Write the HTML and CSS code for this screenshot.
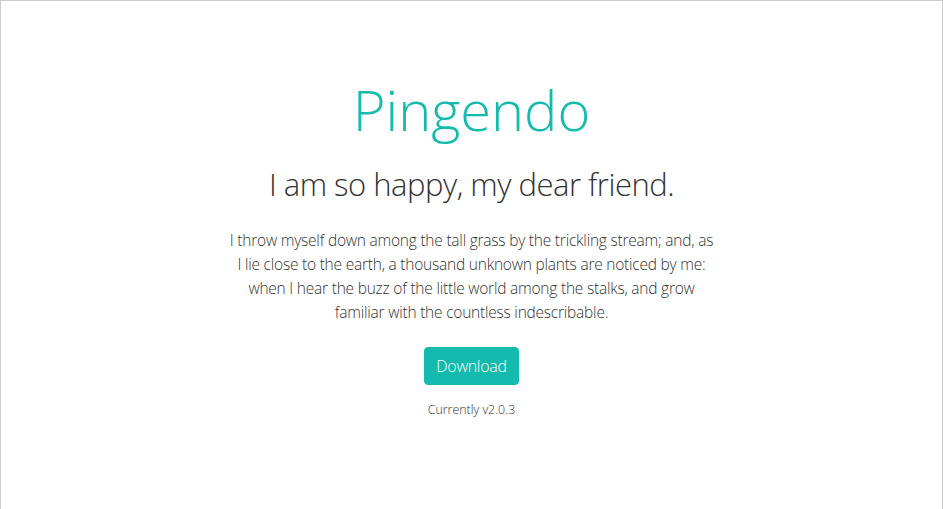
FILE: index.html
```html
<!DOCTYPE html>
<html lang="en">
<head>
<meta charset="utf-8">
<title>Pingendo</title>
<link rel="stylesheet" href="styles.css">
</head>
<body>
<div class="frame">
  <section class="hero">
    <h1 class="title">Pingendo</h1>
    <h2 class="subtitle">I am so happy, my dear friend.</h2>
    <p class="lead">I throw myself down among the tall grass by the trickling stream; and, as I lie close to the earth, a thousand unknown plants are noticed by me: when I hear the buzz of the little world among the stalks, and grow familiar with the countless indescribable.</p>
    <a class="btn" href="#">Download</a>
    <p class="version">Currently v2.0.3</p>
  </section>
</div>
</body>
</html>
```
FILE: styles.css
```css
html, body {
  margin: 0;
  padding: 0;
  height: 100%;
}
body {
  font-family: "Open Sans", "Liberation Sans", sans-serif;
  font-weight: 300;
  color: #333;
  background: #fff;
}
.frame {
  box-sizing: border-box;
  height: 100%;
  border: 1px solid #cccccc;
  border-bottom: none;
}
.hero {
  display: flex;
  flex-direction: column;
  align-items: center;
  text-align: center;
  padding-top: 75px;
}
.title {
  margin: 0;
  font-size: 56px;
  line-height: 1.2;
  font-weight: 300;
  color: #12bbad;
}
.subtitle {
  margin: 23px 0 0;
  font-size: 31px;
  letter-spacing: -0.5px;
  line-height: 1.2;
  font-weight: 300;
  color: #333;
}
.lead {
  margin: 25px 0 0;
  width: 486px;
  font-size: 15.5px;
  letter-spacing: -0.22px;
  line-height: 24px;
}
.btn {
  margin-top: 23px;
  display: inline-block;
  padding: 6px 11px;
  border: 1px solid #12bbad;
  font-size: 16px;
  letter-spacing: -0.3px;
  line-height: 24px;
  color: #fff;
  background: #12bbad;
  border-radius: 4px;
  text-decoration: none;
}
.version {
  margin: 16px 0 0;
  font-size: 12.4px;
  line-height: 1.5;
}
```
